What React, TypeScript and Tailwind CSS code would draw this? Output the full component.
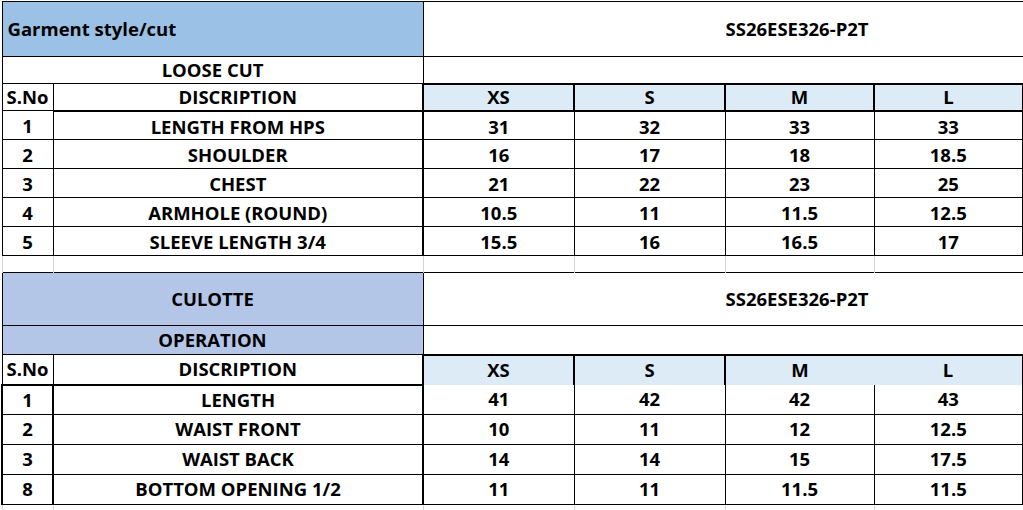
const sizes = ["XS", "S", "M", "L"];

const looseRows = [
  ["1", "LENGTH FROM HPS", "31", "32", "33", "33"],
  ["2", "SHOULDER", "16", "17", "18", "18.5"],
  ["3", "CHEST", "21", "22", "23", "25"],
  ["4", "ARMHOLE (ROUND)", "10.5", "11", "11.5", "12.5"],
  ["5", "SLEEVE LENGTH 3/4", "15.5", "16", "16.5", "17"],
];

const culotteRows = [
  ["1", "LENGTH", "41", "42", "42", "43"],
  ["2", "WAIST FRONT", "10", "11", "12", "12.5"],
  ["3", "WAIST BACK", "14", "14", "15", "17.5"],
  ["8", "BOTTOM OPENING 1/2", "11", "11", "11.5", "11.5"],
];

const GridRow = ({ h }: { h: string }) => (
  <tr className={h}>
    {[0, 1, 2, 3, 4, 5].map((i) => (
      <td key={i} className="border-x border-[#d4d4d4] p-0" />
    ))}
  </tr>
);

export default function App() {
  return (
    <div className="min-h-screen bg-white pt-px pl-px">
      <table className="w-[1021px] table-fixed border-collapse text-center font-['Open_Sans',sans-serif] text-[18.5px] leading-none font-bold text-black">
        <colgroup>
          <col className="w-[51px]" />
          <col className="w-[370px]" />
          <col className="w-[151px]" />
          <col className="w-[151px]" />
          <col className="w-[149px]" />
          <col className="w-[149px]" />
        </colgroup>
        <tbody>
          {/* loose cut sheet */}
          <tr className="h-[55px]">
            <td colSpan={2} className="border border-black bg-[#9bc2e6] p-0 pt-px pl-[5px] text-left">
              Garment style/cut
            </td>
            <td colSpan={4} className="border-y border-black p-0 pl-[302px] text-left">
              SS26ESE326-P2T
            </td>
          </tr>
          <tr className="h-[27px]">
            <td colSpan={2} className="border border-black p-0 pt-px">LOOSE CUT</td>
            <td colSpan={4} className="border-t border-b-2 border-black p-0" />
          </tr>
          <tr className="h-[27px]">
            <td className="border border-black p-0">S.No</td>
            <td className="border border-b-2 border-black p-0">DISCRIPTION</td>
            {sizes.map((s) => (
              <td key={s} className="border-2 border-black bg-[#ddebf7] p-0">
                {s}
              </td>
            ))}
          </tr>
          {looseRows.map((r) => (
            <tr key={r[1]} className="h-[29px]">
              <td className="border border-black p-0 pt-[3px]">{r[0]}</td>
              <td className="border border-r-2 border-black p-0 pt-[3px]">{r[1]}</td>
              <td className="border border-black p-0 pt-[3px]">{r[2]}</td>
              <td className="border border-black p-0 pt-[3px]">{r[3]}</td>
              <td className="border border-black p-0 pt-[3px]">{r[4]}</td>
              <td className="border border-r-2 border-black p-0 pt-[3px]">{r[5]}</td>
            </tr>
          ))}

          <GridRow h="h-[17px]" />

          {/* culotte sheet */}
          <tr className="h-[53px]">
            <td colSpan={2} className="border border-black bg-[#b4c6e7] p-0">CULOTTE</td>
            <td colSpan={4} className="border-y border-black p-0 pl-[302px] text-left">
              SS26ESE326-P2T
            </td>
          </tr>
          <tr className="h-[29px]">
            <td colSpan={2} className="border border-black bg-[#b4c6e7] p-0">OPERATION</td>
            <td colSpan={4} className="border-t border-b-2 border-black p-0" />
          </tr>
          <tr className="h-[30px]">
            <td className="border border-b-2 border-black p-0">S.No</td>
            <td className="border border-r-2 border-b-2 border-black p-0">DISCRIPTION</td>
            <td className="border-2 border-b-0 border-black bg-[#ddebf7] p-0">XS</td>
            <td className="border-2 border-b-0 border-black bg-[#ddebf7] p-0">S</td>
            <td className="border-t-2 border-l-2 border-black bg-[#ddebf7] p-0">M</td>
            <td className="border-t-2 border-r-2 border-black bg-[#ddebf7] p-0">L</td>
          </tr>
          {culotteRows.map((r) => (
            <tr key={r[1]} className="h-[30px]">
              <td className="border-x-2 border-b border-black p-0">{r[0]}</td>
              <td className="border-r-2 border-b border-black p-0">{r[1]}</td>
              <td className="border-x border-b border-black p-0">{r[2]}</td>
              <td className="border-x border-b border-black p-0">{r[3]}</td>
              <td className="border-x border-b border-black p-0">{r[4]}</td>
              <td className="border-r-2 border-b border-l border-black p-0">{r[5]}</td>
            </tr>
          ))}

          <GridRow h="h-[6px]" />
        </tbody>
      </table>
    </div>
  );
}
